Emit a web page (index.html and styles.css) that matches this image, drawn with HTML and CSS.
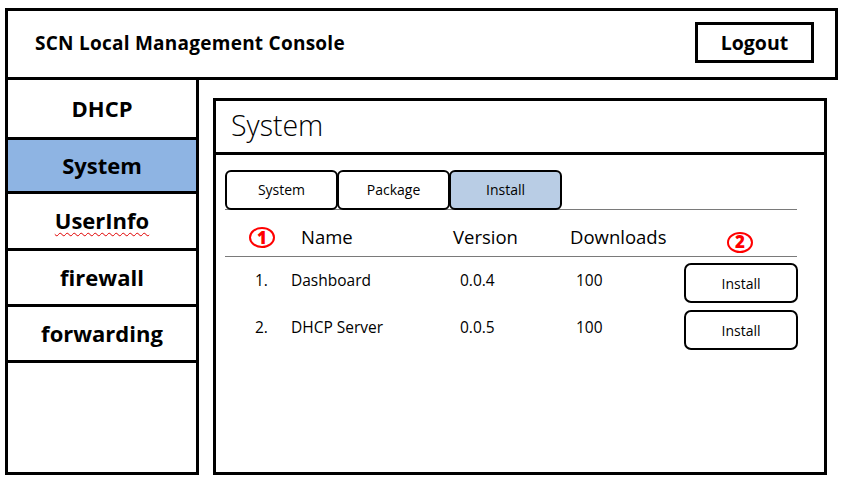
FILE: index.html
```html
<!DOCTYPE html>
<html>
<head>
<meta charset="utf-8">
<link rel="stylesheet" href="styles.css">
</head>
<body>
<div class="frame">
  <header class="topbar">
    <div class="brand">SCN Local Management Console</div>
    <button class="logout">Logout</button>
  </header>
  <div class="main">
    <nav class="sidebar">
      <div class="nav-item first">DHCP</div>
      <div class="nav-item active">System</div>
      <div class="nav-item tall"><span class="spell">UserInfo</span></div>
      <div class="nav-item">firewall</div>
      <div class="nav-item">forwarding</div>
    </nav>
    <section class="panel">
      <div class="panel-title">System</div>
      <div class="panel-body">
        <div class="tabs">
          <div class="tab">System</div>
          <div class="tab">Package</div>
          <div class="tab selected">Install</div>
        </div>
        <div class="table">
          <div class="row head">
            <div class="c1"><span class="mark">1</span></div>
            <div class="c2 hname">Name</div>
            <div class="c3">Version</div>
            <div class="c4">Downloads</div>
            <div class="c5"><span class="mark mark2">2</span></div>
          </div>
          <div class="row item">
            <div class="c1 num">1.</div>
            <div class="c2">Dashboard</div>
            <div class="c3 ver">0.0.4</div>
            <div class="c4 dl">100</div>
            <div class="c5"><button class="install">Install</button></div>
          </div>
          <div class="row item">
            <div class="c1 num">2.</div>
            <div class="c2">DHCP Server</div>
            <div class="c3 ver">0.0.5</div>
            <div class="c4 dl">100</div>
            <div class="c5"><button class="install">Install</button></div>
          </div>
        </div>
      </div>
    </section>
  </div>
</div>
</body>
</html>
```

FILE: styles.css
```css
* { box-sizing: border-box; }
html, body { margin: 0; padding: 0; background: #fff; }
body {
  font-family: "Open Sans", "Noto Sans", "Noto Sans CJK KR", sans-serif;
  color: #000;
}
.frame {
  width: 833px;
  margin: 8px 0 0 5px;
}
.topbar {
  height: 72px;
  border: 3px solid #000;
  display: flex;
  align-items: center;
  justify-content: space-between;
  padding: 0 21px 0 27px;
}
.brand {
  font-weight: 700;
  font-size: 19px;
  letter-spacing: 0.25px;
  margin-top: -3px;
}
.logout {
  width: 119px;
  height: 41px;
  border: 3px solid #000;
  background: #fff;
  font-family: inherit;
  font-weight: 700;
  font-size: 19.5px;
  padding: 0;
  margin-top: -3px;
  color: #000;
}
.main {
  display: flex;
  align-items: flex-start;
}
.sidebar {
  width: 194px;
  height: 395px;
  border: 3px solid #000;
  border-top: none;
  display: flex;
  flex-direction: column;
}
.nav-item {
  height: 56px;
  border-bottom: 3px solid #000;
  display: flex;
  align-items: center;
  justify-content: center;
  font-weight: 700;
  font-size: 22px;
  padding-bottom: 2px;
}
.nav-item.first { height: 60px; }
.nav-item.active { height: 54px; background: #8EB4E3; }
.nav-item.tall { height: 57px; }
.spell {
  text-decoration: underline wavy #e00000 1px;
  text-underline-offset: 3px;
}
.panel {
  margin: 18px 0 0 14px;
  width: 614px;
  height: 377px;
  border: 3px solid #000;
  display: flex;
  flex-direction: column;
}
.panel-title {
  height: 54px;
  border-bottom: 3px solid #000;
  font-size: 28.5px;
  font-weight: 300;
  padding: 5px 0 0 15px;
}
.panel-body {
  padding: 15px 27px 0 9px;
}
.tabs {
  display: flex;
  border-bottom: 1px solid #7a7a7a;
}
.tab {
  width: 113px;
  height: 40px;
  border: 2.5px solid #000;
  border-radius: 6px;
  display: flex;
  align-items: center;
  justify-content: center;
  font-size: 14px;
  margin-right: -1px;
  margin-bottom: -1px;
  padding-bottom: 2px;
  background: #fff;
}
.tab.selected { background: #B9CDE5; }
.row {
  display: grid;
  grid-template-columns: 66px 162px 117px 114px 114px;
  align-items: center;
}
.row.head {
  height: 47px;
  border-bottom: 1px solid #7a7a7a;
  font-size: 18.5px;
  padding-top: 6px;
}
.hname { padding-left: 10px; }
.mark {
  display: inline-flex;
  align-items: center;
  justify-content: center;
  width: 26px;
  height: 21px;
  margin: -4px 0 0 24px;
  border: 2.5px solid #f00;
  border-radius: 50%;
  color: #f00;
  font-weight: 800;
  font-size: 17px;
  line-height: 1;
  padding-bottom: 1px;
}
.c5 { display: flex; justify-content: center; }
.mark2 { margin: 12px 0 0 -2px; }
.row.item {
  height: 40px;
  margin-top: 7px;
  font-size: 15.5px;
}
.row.item:nth-of-type(2) { margin-top: 6px; }
.row.item > div:not(.c5) { padding-bottom: 6px; }
.num { padding-left: 30px; }
.ver { padding-left: 7px; }
.dl { padding-left: 6px; }
.install {
  width: 114px;
  height: 40px;
  border: 2.5px solid #000;
  border-radius: 7px;
  background: #fff;
  font-family: inherit;
  font-size: 14px;
  color: #000;
  padding: 0;
}
```
